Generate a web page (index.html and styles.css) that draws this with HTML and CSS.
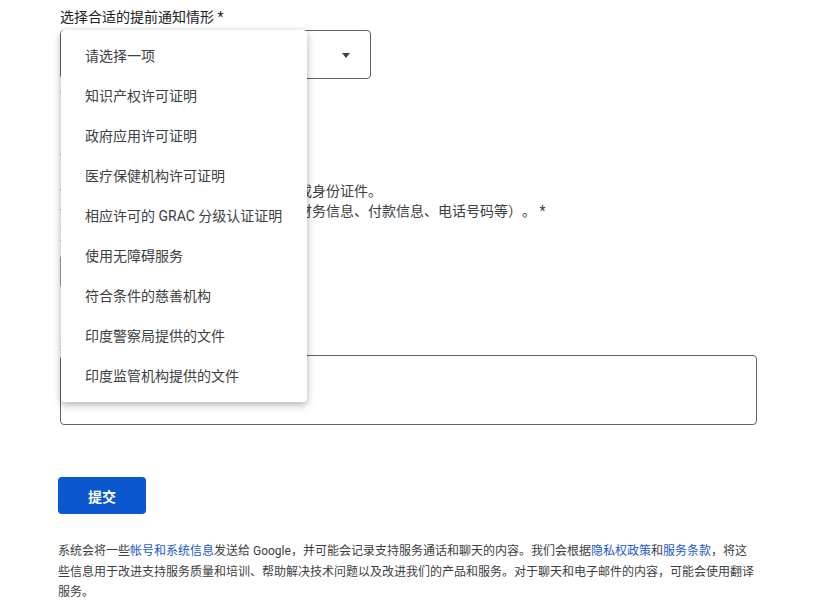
FILE: index.html
```html
<!DOCTYPE html>
<html lang="zh-CN">
<head>
    <meta charset="UTF-8">
    <meta name="viewport" content="width=device-width, initial-scale=1.0">
    <title>提前通知申请</title>
    <link rel="stylesheet" href="styles.css">
</head>
<body>
    <div class="page">
        <form class="support-form">
            <div class="field select-field">
                <label class="field-label">选择合适的提前通知情形 *</label>
                <div class="select-wrap">
                    <div class="select-box">
                        <span class="select-arrow"></span>
                    </div>
                    <!-- open dropdown -->
                    <ul class="select-menu">
                        <li>请选择一项</li>
                        <li>知识产权许可证明</li>
                        <li>政府应用许可证明</li>
                        <li>医疗保健机构许可证明</li>
                        <li>相应许可的 GRAC 分级认证证明</li>
                        <li>使用无障碍服务</li>
                        <li>符合条件的慈善机构</li>
                        <li>印度警察局提供的文件</li>
                        <li>印度监管机构提供的文件</li>
                    </ul>
                </div>
                <p class="field-hint">请选择与您的情况最相符的一项。</p>
            </div>

            <div class="field upload-field">
                <label class="field-label">上传证明文件 *</label>
                <p class="field-desc">请您提供营业执照、相关许可证明文件或身份证件。</p>
                <p class="field-desc">请勿上传含有敏感个人信息的文件（如财务信息、付款信息、电话号码等）。 *</p>
                <p class="field-small">支持的格式：PDF、JPG、PNG</p>
                <button type="button" class="upload-button">添加文件</button>
            </div>

            <div class="field">
                <label class="field-label">其他说明</label>
                <textarea class="text-area"></textarea>
            </div>

            <button type="button" class="submit-button">提交</button>
        </form>

        <p class="legal">
            系统会将一些<a href="#">帐号和系统信息</a>发送给 Google，并可能会记录支持服务通话和聊天的内容。我们会根据<a href="#">隐私权政策</a>和<a href="#">服务条款</a>，将这些信息用于改进支持服务质量和培训、帮助解决技术问题以及改进我们的产品和服务。对于聊天和电子邮件的内容，可能会使用翻译服务。
        </p>
    </div>
</body>
</html>
```

FILE: styles.css
```css
body {
    margin: 0;
    font-family: Roboto, "Noto Sans CJK SC", sans-serif;
    background-color: #ffffff;
    color: #3c4043;
    text-spacing-trim: space-all;
}

.page {
    padding: 7px 0 0 58px;
    width: 699px;
}

.field {
    margin-left: 2px;
}

.field-label {
    display: block;
    font-size: 14px;
    line-height: 20px;
    color: #202124;
}

p {
    margin: 0;
}

.select-wrap {
    position: relative;
    margin-top: 3px;
}

.select-box {
    width: 309px;
    height: 47px;
    border: 1px solid #5f6368;
    border-radius: 4px;
    position: relative;
}

.select-arrow {
    position: absolute;
    right: 20px;
    top: 22px;
    width: 0;
    height: 0;
    border-left: 4px solid transparent;
    border-right: 4px solid transparent;
    border-top: 5px solid #3c4043;
}

.select-menu {
    position: absolute;
    top: 0;
    left: 1px;
    width: 246px;
    margin: 0;
    padding: 6px 0;
    list-style: none;
    background-color: #ffffff;
    border-radius: 4px;
    box-shadow: 0 2px 6px rgba(0, 0, 0, 0.22), 0 4px 12px rgba(0, 0, 0, 0.12);
    z-index: 10;
}

.select-menu li {
    height: 40px;
    line-height: 40px;
    padding-left: 24px;
    font-size: 14px;
    color: #3c4043;
    white-space: nowrap;
}

.field-hint {
    margin-top: 8px;
    font-size: 12px;
    line-height: 16px;
    color: #5f6368;
}

.upload-field {
    margin-top: 36px;
}

.field-desc {
    font-size: 14px;
    line-height: 20px;
    color: #3c4043;
}

.upload-field .field-label {
    margin-bottom: 22px;
}

.field-small {
    margin-top: 5px;
    font-size: 12px;
    line-height: 20px;
    color: #5f6368;
}

.upload-button {
    margin-top: 8px;
    height: 35px;
    padding: 0 16px;
    font-family: inherit;
    font-size: 14px;
    background-color: #ffffff;
    border: 1px solid #9aa0a6;
    border-radius: 4px;
    color: #1a57d1;
}

.upload-field + .field {
    margin-top: 44px;
}

.text-area {
    display: block;
    margin-top: 2px;
    width: 697px;
    height: 70px;
    box-sizing: border-box;
    border: 1px solid #5f6368;
    border-radius: 4px;
    resize: none;
    font-family: inherit;
}

.submit-button {
    margin-top: 52px;
    width: 88px;
    height: 37px;
    border: none;
    border-radius: 4px;
    background-color: #0b57d0;
    color: #ffffff;
    font-family: inherit;
    font-size: 14px;
    font-weight: bold;
    display: block;
}

.legal {
    margin-top: 27px;
    font-size: 12px;
    line-height: 20.5px;
    color: #3c4043;
}

.legal a {
    color: #1a57d1;
    text-decoration: none;
}
```
